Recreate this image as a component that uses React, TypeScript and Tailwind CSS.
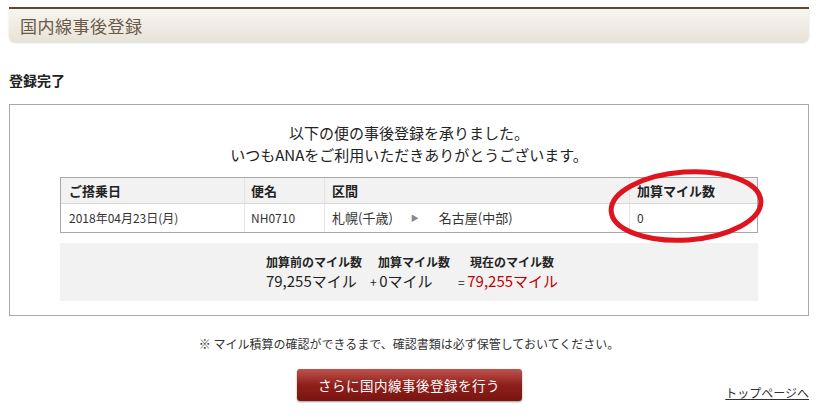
import React from "react";

const jp = { fontFamily: '"Noto Sans CJK JP", "Noto Sans", sans-serif' };

export default function App() {
  return (
    <div className="w-[817px] h-[419px] bg-white text-[#333] overflow-hidden" style={jp}>
      <div className="pl-[9px] w-[809px] pt-[7px]">
        {/* Header */}
        <div className="h-[35px] border-t-2 border-[#5e4a34] rounded-b-[6px] bg-gradient-to-b from-[#f7f5f0] to-[#e8e3d8] shadow-[0_1px_2px_rgba(0,0,0,0.15)] flex items-center pl-[11px]">
          <span className="text-[17px] text-[#6a5848] leading-none tracking-[0.5px]">国内線事後登録</span>
        </div>

        <div className="mt-[28px] h-[20px] flex items-center text-[14px] font-bold text-[#222] leading-none">登録完了</div>

        {/* Main box */}
        <div className="relative mt-[14px] border border-[#a8a8a8] pt-[17px] pb-[14px] px-[50px]">
          <div className="text-center text-[15px] leading-[22px] text-[#222]">
            <div>以下の便の事後登録を承りました。</div>
            <div>いつもANAをご利用いただきありがとうございます。</div>
          </div>

          <div className="mt-[11px] border border-[#a8a8a8] text-[12px]">
            <div className="grid grid-cols-[184px_80px_305px_1fr] bg-[#f2f2f2] h-[25px] font-bold text-[13px] text-[#222]">
              <div className="pl-[8px] flex items-center border-r border-[#e4e4e4]">ご搭乗日</div>
              <div className="pl-[6px] flex items-center border-r border-[#e4e4e4]">便名</div>
              <div className="pl-[7px] flex items-center border-r border-[#e4e4e4]">区間</div>
              <div className="pl-[7px] flex items-center">加算マイル数</div>
            </div>
            <div className="grid grid-cols-[184px_80px_305px_1fr] h-[29px] border-t border-[#d8d8d8] text-[#333]">
              <div className="pl-[8px] flex items-center border-r border-[#e4e4e4]">2018年04月23日(月)</div>
              <div className="pl-[6px] flex items-center border-r border-[#e4e4e4]">NH0710</div>
              <div className="pl-[7px] flex items-center border-r border-[#e4e4e4] text-[13px]">
                <span>札幌(千歳)</span>
                <span className="ml-[18px] text-[8px] text-[#888]">▶</span>
                <span className="ml-[20px]">名古屋(中部)</span>
              </div>
              <div className="pl-[7px] flex items-center">0</div>
            </div>
          </div>

          <div className="mt-[10px] h-[58px] bg-[#f2f2f2] flex flex-col items-center justify-center whitespace-nowrap">
            <div className="pl-[6px]">
              <div className="grid grid-cols-[112px_92px_auto] text-[12px] font-bold text-[#222] leading-[18px]">
                <div>加算前のマイル数</div>
                <div>加算マイル数</div>
                <div>現在のマイル数</div>
              </div>
              <div className="grid grid-cols-[104px_88px_auto] text-[15px] leading-[20px] text-[#222]">
                <div>79,255マイル</div>
                <div>
                  <span className="text-[12px]">+ </span>0マイル
                </div>
                <div>
                  <span className="text-[12px]">= </span>
                  <span className="text-[#c00000]">79,255マイル</span>
                </div>
              </div>
            </div>
          </div>

          {/* red marker ellipse */}
          <svg className="absolute left-[586px] top-[58px]" width="180" height="90" viewBox="0 0 180 90">
            <ellipse cx="90" cy="43" rx="75" ry="34" transform="rotate(-4 90 43)" fill="none" stroke="#e0141e" strokeWidth="5" />
          </svg>
        </div>

        <div className="mt-[19px] text-center text-[12px] text-[#333] leading-[18px]">
          ※ マイル積算の確認ができるまで、確認書類は必ず保管しておいてください。
        </div>

        <div className="relative mt-[16px] h-[33px] flex justify-center">
          <button className="w-[225px] h-[32px] rounded-[3px] bg-gradient-to-b from-[#c0524d] via-[#8e1f1b] to-[#7a1511] text-white text-[13.5px] tracking-[0.5px] shadow-[0_1px_2px_rgba(0,0,0,0.4)]">
            さらに国内線事後登録を行う
          </button>
          <a className="absolute right-0 top-[18px] text-[12px] text-[#333] underline leading-none">トップページへ</a>
        </div>
      </div>
    </div>
  );
}
